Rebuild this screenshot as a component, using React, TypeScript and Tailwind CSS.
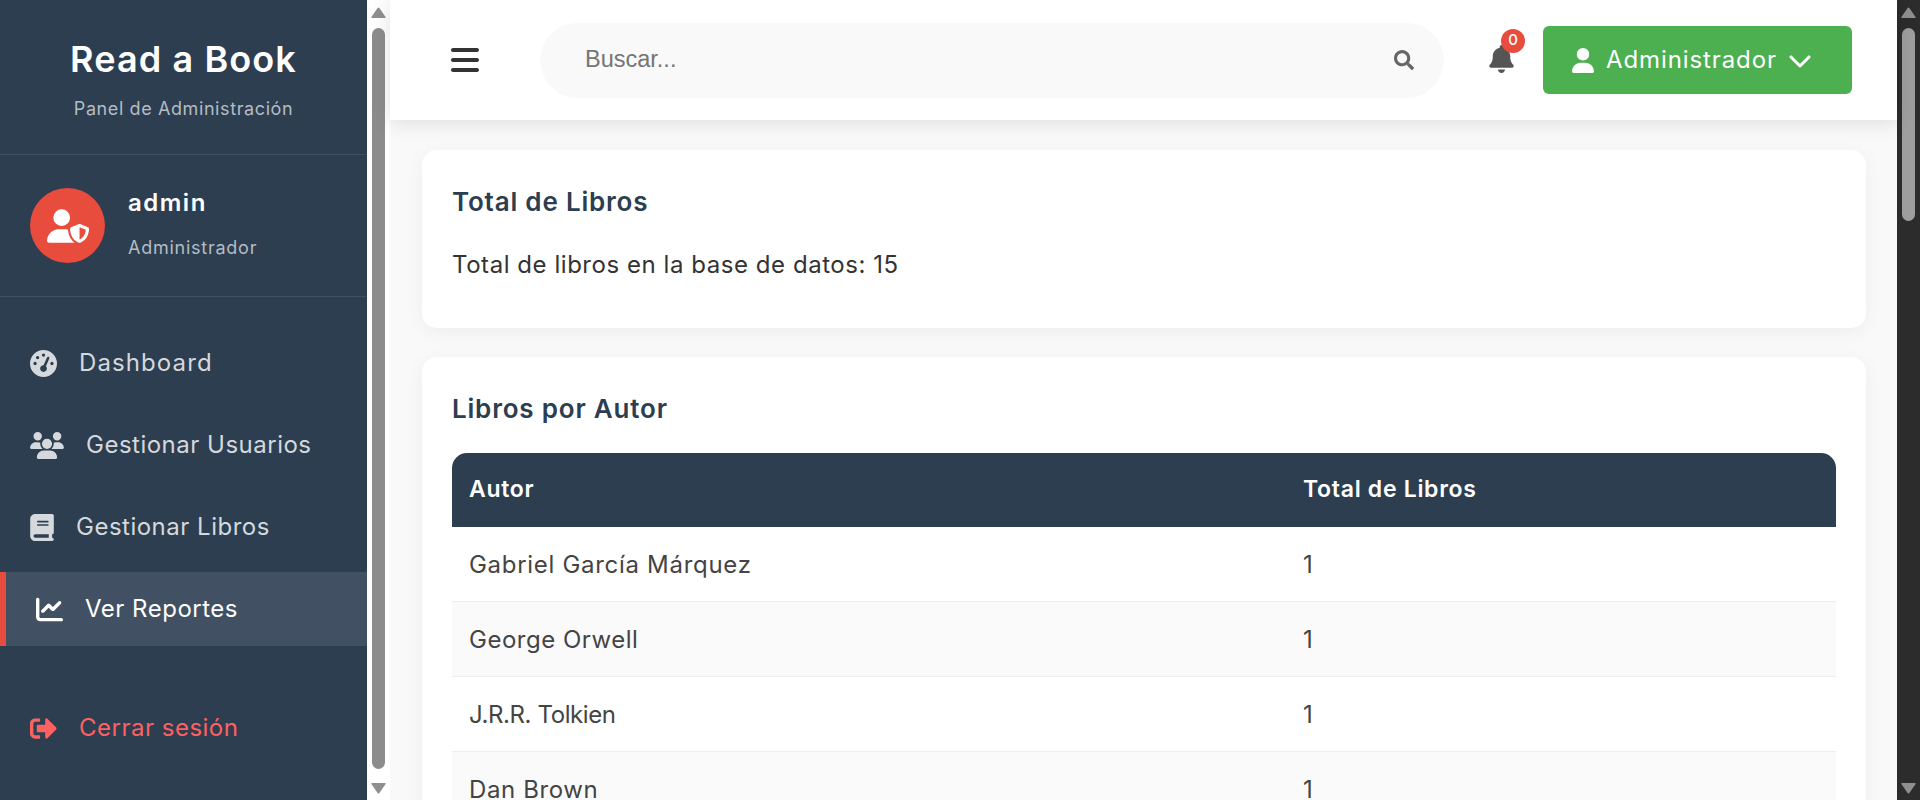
import React from 'react';
import { FaSearch, FaSignOutAlt } from 'react-icons/fa';
import {
  FaBars,
  FaBell,
  FaBook,
  FaChartLine,
  FaChevronDown,
  FaGaugeHigh,
  FaUser,
  FaUserShield,
  FaUsers,
} from 'react-icons/fa6';

const authors = [
  { name: 'Gabriel García Márquez', spacing: 'tracking-[0.7px]' },
  { name: 'George Orwell', spacing: 'tracking-[0.5px]' },
  { name: 'J.R.R. Tolkien', spacing: 'tracking-[-0.4px]' },
  { name: 'Dan Brown', spacing: 'tracking-[0.6px]' },
  { name: 'Paulo Coelho', spacing: 'tracking-[0.5px]' },
];

const Arrow: React.FC<{ down?: boolean }> = ({ down }) => (
  <svg width="15" height="11" viewBox="0 0 15 11" className="shrink-0 fill-[#8f8f8f]">
    {down ? (
      <path d="M1 0h13q1 0 .6 1L8.4 10q-.9 1-1.8 0L.4 1Q0 0 1 0z" />
    ) : (
      <path d="M1 11h13q1 0 .6-1L8.4 1q-.9-1-1.8 0L.4 10q-.4 1 .6 1z" />
    )}
  </svg>
);

const App: React.FC = () => {
  return (
    <div className="flex h-screen overflow-hidden bg-[#f9f9f9] font-['Inter','Noto_Sans',sans-serif]">
      {/* Sidebar */}
      <aside className="flex w-[367px] shrink-0 flex-col bg-[#2c3e50]">
        <div className="flex h-[155px] flex-col items-center border-b border-[#3f5062] pt-[37px]">
          <h1 className="text-[36px] leading-[44px] font-semibold tracking-[1.1px] text-white">Read a Book</h1>
          <p className="mt-[16px] text-[18px] leading-[24px] tracking-[0.6px] text-[#b4bcc4]">Panel de Administración</p>
        </div>

        <div className="flex h-[142px] items-center gap-[23px] border-b border-[#3f5062] pl-[30px]">
          <div className="flex h-[75px] w-[75px] items-center justify-center rounded-full bg-[#e74c3c] text-white">
            <FaUserShield className="h-[34px] w-[42px]" />
          </div>
          <div className="-mt-[3px]">
            <div className="text-[24px] leading-[30px] font-semibold tracking-[1.5px] text-white">admin</div>
            <div className="mt-[18px] text-[18px] leading-[24px] tracking-[0.75px] text-[#b4bcc4]">Administrador</div>
          </div>
        </div>

        <nav className="mt-[29px] flex flex-col gap-[8px] text-[24px] tracking-[0.5px] text-[#d5d8dc]">
          <a className="flex h-[74px] items-center gap-[22px] pl-[30px]">
            <FaGaugeHigh className="h-[27px] w-[27px]" />
            <span className="tracking-[1.1px]">Dashboard</span>
          </a>
          <a className="flex h-[74px] items-center gap-[22px] pl-[30px]">
            <FaUsers className="h-[27px] w-[34px]" />
            Gestionar Usuarios
          </a>
          <a className="flex h-[74px] items-center gap-[22px] pl-[30px]">
            <FaBook className="h-[27px] w-[24px]" />
            Gestionar Libros
          </a>
          <a className="flex h-[74px] items-center gap-[22px] border-l-[6px] border-[#e74c3c] bg-[#415062] pl-[30px] text-white">
            <FaChartLine className="h-[27px] w-[27px]" />
            Ver Reportes
          </a>
        </nav>

        <a className="mt-[45px] flex h-[74px] items-center gap-[22px] pl-[30px] text-[24px] tracking-[0.5px] text-[#ff6060]">
          <FaSignOutAlt className="h-[27px] w-[27px]" />
          Cerrar sesión
        </a>
      </aside>

      {/* Sidebar scrollbar */}
      <div className="flex w-[23px] shrink-0 flex-col items-center bg-white pt-[7px] pb-[6px]">
        <Arrow />
        <div className="mt-[10px] h-[741px] w-[13px] rounded-full bg-[#8c8c8c]" />
        <div className="mt-auto">
          <Arrow down />
        </div>
      </div>

      {/* Main */}
      <div className="flex min-w-0 flex-1 flex-col">
        <header className="relative z-10 flex h-[120px] shrink-0 items-center bg-white pl-[61px] shadow-[0_2px_20px_rgba(0,0,0,0.12)]">
          <FaBars className="h-[32px] w-[28px] shrink-0 text-[#333333]" />
          <div className="ml-[61px] flex h-[75px] w-[904px] shrink-0 items-center justify-between rounded-full bg-[#f9f9f9] pr-[30px] pl-[45px]">
            <span className="font-['Liberation_Sans',sans-serif] text-[23.5px] text-[#757575]">Buscar...</span>
            <FaSearch className="h-[20px] w-[20px] text-[#666666]" />
          </div>
          <div className="relative ml-[45px] -mt-[3px] shrink-0 text-[#555555]">
            <FaBell className="h-[28px] w-[25px]" />
            <span className="absolute -top-[16px] left-[12px] flex h-[24px] w-[24px] items-center justify-center rounded-full bg-[#e74c3c] text-[15px] font-medium text-white">
              0
            </span>
          </div>
          <button className="ml-[29px] flex h-[68px] w-[309px] shrink-0 items-center gap-[12px] rounded-[6px] bg-[#4caf50] pl-[29px] text-[24px] tracking-[0.9px] text-white">
            <FaUser className="h-[25px] w-[22px]" />
            Administrador
            <FaChevronDown className="-ml-[1px] h-[24px] w-[24px]" />
          </button>
        </header>

        <main className="min-h-0 flex-1 overflow-hidden pt-[30px] pr-[31px] pl-[32px]">
          <section className="h-[178px] rounded-[15px] bg-white p-[30px] shadow-[0_4px_20px_rgba(0,0,0,0.05)]">
            <h3 className="text-[26px] leading-[44px] font-semibold tracking-[0.8px] text-[#2c3e50]">Total de Libros</h3>
            <p className="mt-[23px] text-[24px] leading-[36px] tracking-[0.55px] text-[#333333]">
              Total de libros en la base de datos: 15
            </p>
          </section>

          <section className="mt-[29px] rounded-[15px] bg-white p-[30px] shadow-[0_4px_20px_rgba(0,0,0,0.05)]">
            <h3 className="text-[26px] leading-[44px] font-semibold tracking-[0.8px] text-[#2c3e50]">Libros por Autor</h3>
            <table className="mt-[22px] w-full border-separate border-spacing-0 overflow-hidden rounded-t-[15px] text-left tracking-[0.7px]">
              <thead>
                <tr className="bg-[#2c3e50] text-[23px] text-white">
                  <th className="h-[74px] w-[834px] pb-[1px] pl-[17px] font-semibold">Autor</th>
                  <th className="h-[74px] pb-[1px] pl-[17px] font-semibold">Total de Libros</th>
                </tr>
              </thead>
              <tbody className="text-[24px] text-[#444444]">
                {authors.map(({ name, spacing }, i) => (
                  <tr key={name} className={i % 2 === 1 ? 'bg-[#fafafa]' : 'bg-white'}>
                    <td className={`h-[75px] border-b border-[#eeeeee] pt-[1px] pl-[17px] ${spacing}`}>{name}</td>
                    <td className="h-[75px] border-b border-[#eeeeee] pt-[1px] pl-[17px]">1</td>
                  </tr>
                ))}
              </tbody>
            </table>
          </section>
        </main>
      </div>

      {/* Page scrollbar */}
      <div className="flex w-[23px] shrink-0 flex-col items-center bg-[#2c2c2c] pt-[7px] pb-[6px]">
        <Arrow />
        <div className="mt-[10px] h-[193px] w-[13px] rounded-full bg-[#9e9e9e]" />
        <div className="mt-auto">
          <Arrow down />
        </div>
      </div>
    </div>
  );
};

export default App;
